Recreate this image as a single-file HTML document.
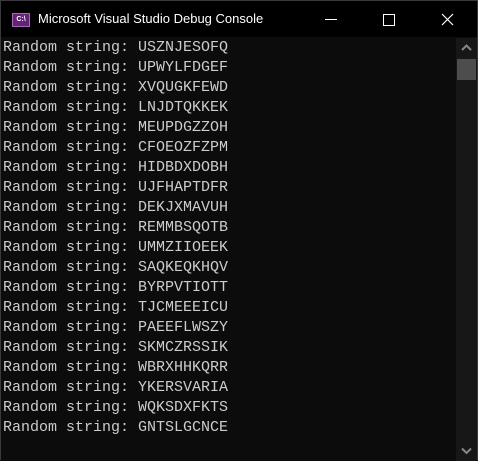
<!DOCTYPE html>
<html><head><style>
body{margin:0;width:478px;height:461px;overflow:hidden;background:#0c0c0c;position:relative}
.frame{position:absolute;left:0;top:0;width:476px;height:459px;border:1px solid #3a3a3a;border-bottom:none}
.title{position:absolute;left:1px;top:1px;width:476px;height:36px;background:#000}
.ttxt{position:absolute;left:37px;top:10px;color:#fff;font:13px "Liberation Sans",sans-serif;white-space:nowrap}
.icon{position:absolute;left:11px;top:12px;width:18px;height:14px;background:#68217a;border:1px solid #9a6fb0;box-sizing:border-box;color:#fff;font:bold 7px "Liberation Sans",sans-serif;text-align:center;line-height:12px}
.min{position:absolute;left:324px;top:18px;width:12px;height:1px;background:#fff}
.max{position:absolute;left:382px;top:13px;width:10px;height:10px;border:1px solid #fff}
.txt{position:absolute;left:3px;top:38px;color:#cccccc;font:15px/20px "Liberation Mono",monospace;white-space:pre}
.sb{position:absolute;left:456px;top:38px;width:21px;height:423px;background:#171717}
.thumb{position:absolute;left:457px;top:59px;width:19px;height:21px;background:#4d4d4d}
</style></head><body>
<div class="frame"></div>
<div class="title">
<div class="icon">C:\</div>
<div class="ttxt">Microsoft Visual Studio Debug Console</div>
<div class="min"></div>
<div class="max"></div>
<svg style="position:absolute;left:440px;top:12px" width="13" height="13"><path d="M1 1L12 12M12 1L1 12" stroke="#fff" stroke-width="1.2"/></svg>
</div>
<div class="txt">Random string: USZNJESOFQ
Random string: UPWYLFDGEF
Random string: XVQUGKFEWD
Random string: LNJDTQKKEK
Random string: MEUPDGZZOH
Random string: CFOEOZFZPM
Random string: HIDBDXDOBH
Random string: UJFHAPTDFR
Random string: DEKJXMAVUH
Random string: REMMBSQOTB
Random string: UMMZIIOEEK
Random string: SAQKEQKHQV
Random string: BYRPVTIOTT
Random string: TJCMEEEICU
Random string: PAEEFLWSZY
Random string: SKMCZRSSIK
Random string: WBRXHHKQRR
Random string: YKERSVARIA
Random string: WQKSDXFKTS
Random string: GNTSLGCNCE</div>
<div class="sb"></div>
<div class="thumb"></div>
<svg style="position:absolute;left:461px;top:44px" width="11" height="8"><path d="M1 6L5.5 1.5L10 6" stroke="#888" stroke-width="2" fill="none"/></svg>
<svg style="position:absolute;left:461px;top:447px" width="11" height="8"><path d="M1 1.5L5.5 6L10 1.5" stroke="#888" stroke-width="2" fill="none"/></svg>
</body></html>
